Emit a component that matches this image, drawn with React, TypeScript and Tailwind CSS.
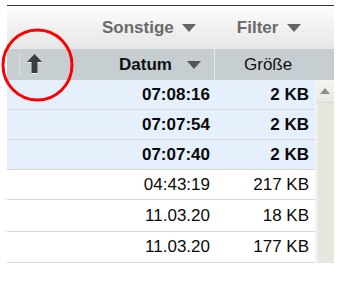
import React from 'react';

interface Row {
  time: string;
  size: string;
  unread: boolean;
}

const rows: Row[] = [
  { time: '07:08:16', size: '2 KB', unread: true },
  { time: '07:07:54', size: '2 KB', unread: true },
  { time: '07:07:40', size: '2 KB', unread: true },
  { time: '04:43:19', size: '217 KB', unread: false },
  { time: '11.03.20', size: '18 KB', unread: false },
  { time: '11.03.20', size: '177 KB', unread: false },
];

const rowHeights = ['h-[30px]', 'h-[30px]', 'h-[30px]', 'h-[30px]', 'h-[32px]', 'h-[31px]'];

const Caret: React.FC<{ className?: string }> = ({ className }) => (
  <svg width="14" height="8" viewBox="0 0 14 8" className={className}>
    <polygon points="0,0 14,0 7,8" fill="currentColor" />
  </svg>
);

const App: React.FC = () => {
  return (
    <div className="relative w-[342px] h-[285px] bg-white pl-[7px] pt-[5px] font-['Liberation_Sans',Arial,sans-serif]">
      <div className="w-[327px] border-t border-[#2f3336]">
        {/* toolbar */}
        <div className="h-[43px] bg-gradient-to-b from-[#fdfdfd] to-[#e6e6e6] flex items-center text-[17px] font-bold text-[#6a6a6a]">
          <div className="ml-[95px] flex items-center">
            Sonstige
            <Caret className="ml-[8px] text-[#666]" />
          </div>
          <div className="ml-[41px] flex items-center">
            Filter
            <Caret className="ml-[9px] text-[#666]" />
          </div>
        </div>

        {/* column header */}
        <div className="h-[31px] bg-[#c6ced1] flex items-stretch text-[17px] text-[#111]">
          <div className="w-[13px] flex items-center justify-end">
            <div className="w-px h-[22px] bg-[#dde3e5]" />
          </div>
          <div className="w-[194px] flex items-center">
            <svg width="15" height="21" viewBox="0 0 15 21" className="ml-[7px]">
              <polygon points="7.5,1 15,9 10.5,9 10.5,20 4.5,20 4.5,9 0,9" fill="#f2f4f5" />
              <polygon points="7.5,0 15,8 10.5,8 10.5,19 4.5,19 4.5,8 0,8" fill="#3b3d3e" />
            </svg>
            <span className="ml-[77px] font-bold">Datum</span>
            <Caret className="ml-[15px] text-[#555]" />
          </div>
          <div className="w-px bg-[#e4e9ea]" />
          <div className="flex-1 flex items-center pl-[29px]">Größe</div>
        </div>

        {/* body */}
        <div className="flex">
          <div className="w-[308px] text-[17px] text-[#0a0a0a]">
            {rows.map((r, i) => (
              <div
                key={i}
                className={`${rowHeights[i]} flex items-center border-b border-[#d6d8da] ${r.unread ? 'bg-[#e6f0fc] font-bold' : 'bg-white'}`}
              >
                <div className="w-[203px] text-right">{r.time}</div>
                <div className="w-[99px] text-right">{r.size}</div>
              </div>
            ))}
          </div>
          {/* scrollbar */}
          <div className="w-[19px] flex flex-col bg-[#e6e6dd] border-l border-[#f4f4ef]">
            <div className="h-[23px] flex items-center justify-center bg-gradient-to-b from-[#f4f4f0] to-[#e9e9e2] border-b border-[#dcdcd3]">
              <svg width="10" height="6" viewBox="0 0 10 6">
                <polygon points="5,0 10,6 0,6" fill="#8c8c8c" />
              </svg>
            </div>
            <div className="flex-1 border-l-[2px] border-[#f0f0ea]" />
          </div>
        </div>
      </div>

      {/* annotation */}
      <svg
        className="absolute left-[1px] top-[28px]"
        width="73"
        height="74"
        viewBox="0 0 73 74"
      >
        <ellipse cx="36.5" cy="37" rx="34.5" ry="35" fill="none" stroke="#ff0000" strokeWidth="3" />
      </svg>
    </div>
  );
};

export default App;
